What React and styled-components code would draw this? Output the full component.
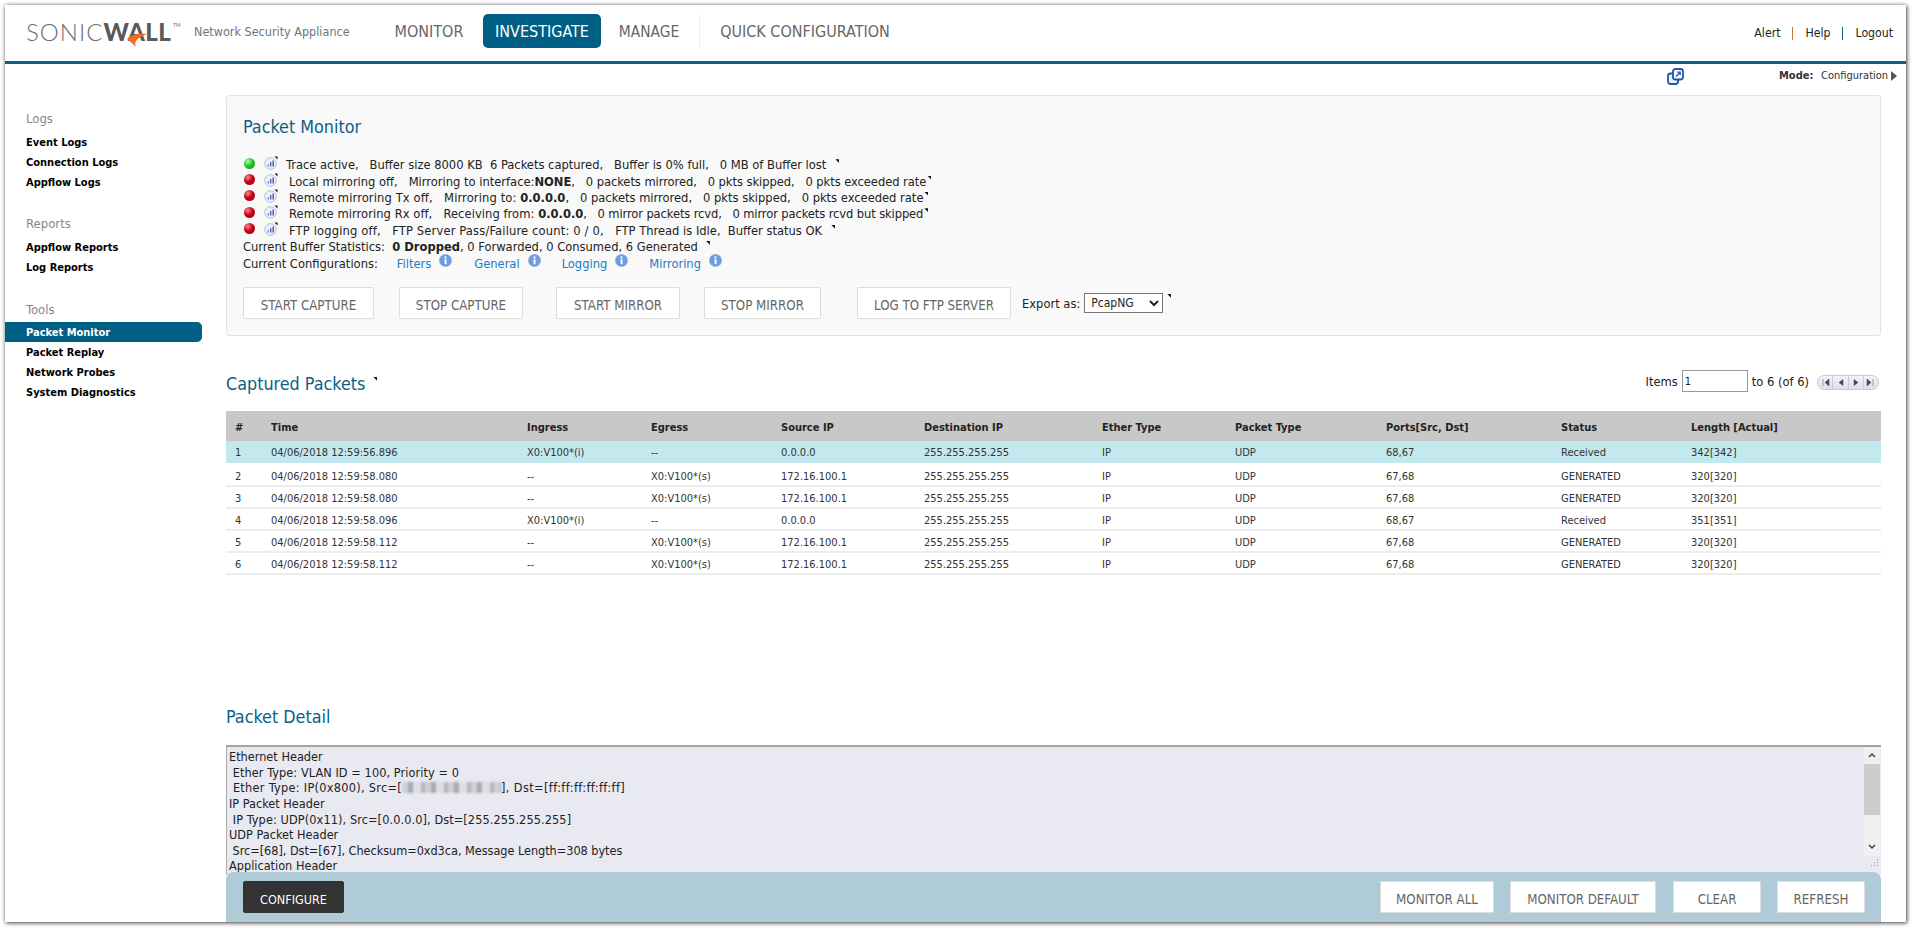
import React from "react";
import styled, { createGlobalStyle } from "styled-components";

const FONT = `"DejaVu Sans Condensed", "Noto Sans", "Liberation Sans", sans-serif`;

const Global = createGlobalStyle`
  html, body { margin: 0; padding: 0; background: #fff; overflow: hidden; }
  body { font-family: ${FONT}; font-size: 12.8px; color: #222; }
  * { box-sizing: border-box; }
`;

const Frame = styled.div`
  position: absolute; left: 5px; top: 5px; width: 1901px; height: 917px;
  background: #fff; overflow: hidden;
  box-shadow: 1px 1px 4px rgba(0,0,0,.65), 0 0 5px rgba(0,0,0,.25);
`;
const Header = styled.header`
  height: 59px; border-bottom: 3px solid #0b5f85; display: flex; align-items: flex-start; position: relative;
`;
const Logo = styled.div`
  position: absolute; left: 21px; top: 15px; width: 156px; height: 28px;
  font-family: "Lato", "Liberation Sans", sans-serif; font-size: 24px; line-height: 24px; white-space: nowrap; color: #6d6e71;
`;
const LogoThin = styled.span`font-weight: 300; letter-spacing: 1px;`;
const LogoBold = styled.span`font-weight: 900; color: #58595b; letter-spacing: 0.4px;`;
const LogoMark = styled.svg`position: absolute; left: 0; top: 0;`;
const Tm = styled.span`position: absolute; left: 147px; top: -7px; font-size: 5px; color: #666;`;
const Tagline = styled.span`
  position: absolute; left: 189px; top: 19px; font-size: 12.5px; line-height: 16px; color: #72757a; white-space: nowrap;
`;
const Nav = styled.nav`
  position: absolute; left: 377px; top: 9px; display: flex; height: 34px; align-items: center;
`;
const NavItem = styled.a`
  height: 34px; line-height: 36px; font-size: ${p => p.$fs || 16}px; color: ${p => p.$active ? "#fff" : "#666"};
  background: ${p => p.$active ? "#005f85" : "transparent"};
  border-radius: 5px; padding: 0; width: ${p => p.$w}px; margin-left: ${p => p.$ml || 0}px; text-align: center; white-space: nowrap;
`;
const NavDivider = styled.span`width: 1px; height: 32px; background: #eee; margin: 0 9px 0 10px;`;
const TopLinks = styled.div`
  position: absolute; right: 13px; top: 19px; display: flex; align-items: center; font-size: 12.2px; color: #222; line-height: 18px;
`;
const TopSep = styled.span`width: 1px; height: 13px; margin: 0 12px; background: ${p => p.$c};`;

const Body = styled.div`display: flex; height: 858px;`;
const Sidebar = styled.aside`width: 221px; padding-top: 42px; flex: none;`;
const SideGroup = styled.div`margin-bottom: 19px;`;
const SideTitle = styled.div`
  height: 26px; padding: 3px 0 0 21px; line-height: ${p => p.$lh || 20}px; font-size: 13px; color: #888;
`;
const SideLink = styled.a`
  display: block; height: 20px; line-height: 22px; padding-left: 21px; width: 197px; font-size: 11px; font-weight: 700; white-space: nowrap;
  color: ${p => p.$active ? "#fff" : "#000"};
  background: ${p => p.$active ? "#005f85" : "transparent"};
  border-radius: ${p => p.$active ? "0 5px 5px 0" : "0"};
`;

const Main = styled.main`position: relative; width: 1680px; height: 858px; padding-right: 25px;`;
const Strip = styled.div`height: 31px; position: relative;`;
const CopyIcon = styled.svg`position: absolute; left: 1441px; top: 4px;`;
const ModeLabel = styled.span`position: absolute; left: 1553px; top: 4px; font-size: 11px; line-height: 16px; font-weight: 700; color: #333;`;
const ModeValue = styled.span`position: absolute; left: 1595px; top: 4px; font-size: 11px; line-height: 16px; color: #333;`;
const ModeArrow = styled.span`
  position: absolute; left: 1665px; top: 7px; width: 0; height: 0;
  border-left: 6px solid #555; border-top: 5px solid transparent; border-bottom: 5px solid transparent;
`;

const Panel = styled.section`
  height: 241px; background: #f9f9f9; border: 1px solid #e2e2e2; border-radius: 3px; padding: 0 0 0 16px; position: relative;
`;
const PanelTitle = styled.h2`
  margin: 0; padding-top: 19px; height: 61px; font-weight: 400; font-size: 17.8px; line-height: 24px; color: #0b5f85;
`;
const StatusRow = styled.div`
  height: 16.4px; display: flex; align-items: center; white-space: pre; font-size: 12.8px; line-height: 16px; color: #222;
`;
const Ball = styled.span`
  width: 11px; height: 11px; border-radius: 50%; flex: none; margin: -4px 9px 0 1px;
  background: radial-gradient(circle at 35% 30%, ${p => p.$on ? "#b5f7a8, #16c41f 50%, #0a9a14" : "#f58a90, #c8001a 45%, #a00014"});
`;
const ChartIcon = styled.svg`flex: none; margin: -4px 0 0 0;`;
const RowText = styled.span`margin-left: ${p => p.$ml}px;`;
const Spaced = styled.span`letter-spacing: ${p => p.$ls}px;`;
const Tick = styled.i`
  display: inline-block; width: 4px; height: 4px; background: #111; clip-path: polygon(0 0, 100% 0, 100% 100%);
  margin-left: ${p => p.$ml || 0}px; vertical-align: ${p => p.$va || 6}px;
`;
const RowTick = styled(Tick)`margin-top: -9px;`;
const FieldTick = styled(Tick)`align-self: flex-start; margin-top: 7px;`;
const Bold = styled.b`font-weight: 700;`;
const ConfigLink = styled.a`color: #1c7cc4; margin-left: ${p => p.$ml}px;`;
const InfoIcon = styled.svg`margin: -6px 0 0 8px; flex: none;`;
const ButtonRow = styled.div`
  position: absolute; left: 16px; top: 191px; display: flex; align-items: center;
`;
const Btn = styled.button`
  height: 32px; width: ${p => p.$w}px; margin-left: ${p => p.$ml || 0}px; padding: 4px 0 0;
  font-family: ${FONT}; font-size: 13.2px; color: #666; background: #fff; border: 1px solid #ddd; border-radius: 1px; white-space: nowrap;
`;
const DarkBtn = styled(Btn)`background: #333; color: #fff; border-color: #333; border-radius: 2px; font-size: 12.5px;`;
const ExportLabel = styled.span`margin-left: 11px; font-size: 12.8px; color: #222;`;
const Select = styled.select`
  margin-left: 4px; width: 79px; height: 20px; font-family: ${FONT}; font-size: 12px; border: 1px solid #767676; background: #fff; color: #222; padding: 0 2px; border-radius: 0;
`;

const CaptureHead = styled.div`height: 75px; position: relative;`;
const Heading = styled.h2`
  margin: 0; position: absolute; left: 0; top: ${p => p.$top}px; font-weight: 400; font-size: 17.8px; line-height: 24px; color: #0b5f85; white-space: nowrap;
`;
const Paging = styled.div`
  position: absolute; right: 2px; top: 34px; display: flex; align-items: center; font-size: 12.8px; color: #222; height: 22px; white-space: pre;
`;
const PageInput = styled.input`
  width: 66px; height: 22px; margin: 0 4px 0 4px; border: 1px solid #999; padding: 0 2px; font-family: ${FONT}; font-size: 11px; color: #222; background: #fff;
`;
const Pager = styled.div`
  margin: 2px 0 0 8px; width: 62px; height: 15px; display: flex; border: 1px solid #c9cbd8; border-radius: 7px; overflow: hidden; background: linear-gradient(#f2f3f9, #dde0ec);
`;
const PagerCell = styled.span`
  flex: 1; display: flex; align-items: center; justify-content: center; border-right: ${p => p.$last ? "none" : "1px solid #c9cbd8"};
`;

const Table = styled.table`
  width: 1655px; border-collapse: collapse; table-layout: fixed; font-size: 11px; color: #333;
`;
const Th = styled.th`
  height: 30px; background: #c8c8c8; text-align: left; padding: 2px 0 0 9px; font-weight: 700; font-size: 11px; color: #222; white-space: nowrap;
`;
const Tr = styled.tr`background: ${p => p.$sel ? "#c3e8ee" : "#fff"};`;
const Td = styled.td`
  height: ${p => p.$sel ? 23 : 22}px; padding: ${p => p.$sel ? 1 : 2}px 0 0 9px; border-bottom: 2px solid ${p => p.$sel ? "#fff" : "#ececec"}; white-space: nowrap; color: #333;
`;

const DetailWrap = styled.div`position: relative; height: 171px;`;
const DetailBox = styled.div`
  position: absolute; left: 0; top: 170px; width: 1655px; height: 130px; background: #e9e9f2; border-top: 2px solid #a2a2a2; border-left: 1px solid #aaa; padding: 2px 0 0 2px; overflow: hidden;
  font-size: 12.6px; color: #222;
`;
const DetailLine = styled.div`height: 15.65px; line-height: 15.65px; white-space: pre;`;
const Blur = styled.span`
  display: inline-block; width: 99px; height: 11px; vertical-align: -1px;
  background: repeating-linear-gradient(90deg, #cfcfd6 0 6px, #a9a9b2 6px 11px, #dedee4 11px 19px, #b5b5bd 19px 23px);
  filter: blur(1.2px);
`;
const ScrollBar = styled.div`
  position: absolute; left: 1637px; top: 0; width: 16px; height: 109px; background: #f0f0f0;
`;
const Thumb = styled.div`position: absolute; top: 17px; left: 0; width: 16px; height: 51px; background: #cdcdcd;`;
const ScrollArrow = styled.svg`position: absolute; left: 4px; top: ${p => p.$top}px;`;
const Grip = styled.svg`position: absolute; left: 1642px; top: 111px;`;

const Footer = styled.footer`
  position: absolute; left: 0; bottom: 0; width: 1655px; height: 50px; background: #b0cbd8; border-radius: 8px 8px 0 0; padding: 9px 16px 0 17px; display: flex; align-items: flex-start;
`;
const Spacer = styled.div`flex: 1;`;

const cols = [36,256,124,130,143,178,133,151,175,130,199];
const heads = ["#","Time","Ingress","Egress","Source IP","Destination IP","Ether Type","Packet Type","Ports[Src, Dst]","Status","Length [Actual]"];
const rows = [
  ["1","04/06/2018 12:59:56.896","X0:V100*(i)","--","0.0.0.0","255.255.255.255","IP","UDP","68,67","Received","342[342]"],
  ["2","04/06/2018 12:59:58.080","--","X0:V100*(s)","172.16.100.1","255.255.255.255","IP","UDP","67,68","GENERATED","320[320]"],
  ["3","04/06/2018 12:59:58.080","--","X0:V100*(s)","172.16.100.1","255.255.255.255","IP","UDP","67,68","GENERATED","320[320]"],
  ["4","04/06/2018 12:59:58.096","X0:V100*(i)","--","0.0.0.0","255.255.255.255","IP","UDP","68,67","Received","351[351]"],
  ["5","04/06/2018 12:59:58.112","--","X0:V100*(s)","172.16.100.1","255.255.255.255","IP","UDP","67,68","GENERATED","320[320]"],
  ["6","04/06/2018 12:59:58.112","--","X0:V100*(s)","172.16.100.1","255.255.255.255","IP","UDP","67,68","GENERATED","320[320]"],
];

const Chart = () => (
  <ChartIcon width="14" height="14" viewBox="0 0 14 14">
    <circle cx="6.5" cy="7.5" r="5.8" fill="#eceef8" stroke="#b9bdd6" strokeWidth="1" />
    <rect x="3.5" y="8" width="1.4" height="2.5" fill="#7f90c8" />
    <rect x="6" y="6" width="1.4" height="4.5" fill="#4f6cb8" />
    <rect x="8.5" y="4.5" width="1.4" height="6" fill="#3f5aa8" />
    <path d="M10.5 0.5 L13.5 0.5 L13.5 3.5 Z" fill="#111" />
  </ChartIcon>
);
const Info = () => (
  <InfoIcon width="13" height="13" viewBox="0 0 13 13">
    <circle cx="6.5" cy="6.5" r="6.2" fill="#6f9cdc" stroke="#9db9e4" strokeWidth=".6" />
    <circle cx="6.5" cy="3.4" r="1.1" fill="#fff" />
    <rect x="5.6" y="5.2" width="1.9" height="5" fill="#fff" />
  </InfoIcon>
);

export default function App() {
  return (
    <>
      <Global />
      <Frame>
        <Header>
          <Logo>
            <LogoThin>SONIC</LogoThin><LogoBold>WALL</LogoBold>
            <Tm>TM</Tm>
            <LogoMark width="156" height="36" viewBox="0 0 156 36">
              <path d="M121 14 C112 13 104 15 101 19 C104 21 107 24 110 27 C108 22 109 19 121 14 Z" fill="#f26b21" />
            </LogoMark>
          </Logo>
          <Tagline>Network Security Appliance</Tagline>
          <Nav>
            <NavItem $w={94}>MONITOR</NavItem>
            <NavItem $active $w={118} $ml={7}>INVESTIGATE</NavItem>
            <NavItem $w={80} $ml={8} $fs={15.4}>MANAGE</NavItem>
            <NavDivider />
            <NavItem $w={192}>QUICK CONFIGURATION</NavItem>
          </Nav>
          <TopLinks>
            <span>Alert</span><TopSep $c="#c87a3a" /><span>Help</span><TopSep $c="#0b5f85" /><span>Logout</span>
          </TopLinks>
        </Header>
        <Body>
          <Sidebar>
            <SideGroup>
              <SideTitle>Logs</SideTitle>
              <SideLink>Event Logs</SideLink>
              <SideLink>Connection Logs</SideLink>
              <SideLink>Appflow Logs</SideLink>
            </SideGroup>
            <SideGroup>
              <SideTitle>Reports</SideTitle>
              <SideLink>Appflow Reports</SideLink>
              <SideLink>Log Reports</SideLink>
            </SideGroup>
            <SideGroup>
              <SideTitle $lh={22}>Tools</SideTitle>
              <SideLink $active>Packet Monitor</SideLink>
              <SideLink>Packet Replay</SideLink>
              <SideLink>Network Probes</SideLink>
              <SideLink>System Diagnostics</SideLink>
            </SideGroup>
          </Sidebar>
          <Main>
            <Strip>
              <CopyIcon width="17" height="17" viewBox="0 0 17 17">
                <rect x="1" y="5.5" width="10" height="10.5" rx="2.5" fill="#eef0f6" stroke="#1f55a8" strokeWidth="1.8" />
                <rect x="6" y="1" width="10" height="10.5" rx="2.5" fill="#fff" stroke="#1f55a8" strokeWidth="1.8" />
                <path d="M9 8.5 L13 4.5 M10.3 4.2 H13.2 V7" fill="none" stroke="#1f55a8" strokeWidth="1.3" />
              </CopyIcon>
              <ModeLabel>Mode:</ModeLabel>
              <ModeValue>Configuration</ModeValue>
              <ModeArrow />
            </Strip>
            <Panel>
              <PanelTitle>Packet Monitor</PanelTitle>
              <StatusRow><Ball $on /><Chart /><RowText $ml={8}>{"Trace active,   Buffer size 8000 KB  6 Packets captured,   Buffer is 0% full,   0 MB of Buffer lost"}<Tick $ml={9} /></RowText></StatusRow>
              <StatusRow><Ball /><Chart /><RowText $ml={11}>{"Local mirroring off,   Mirroring to interface:"}<Bold>NONE</Bold><Spaced $ls={-0.05}>{",   0 packets mirrored,   0 pkts skipped,   0 pkts exceeded rate"}</Spaced><Tick $ml={1} /></RowText></StatusRow>
              <StatusRow><Ball /><Chart /><RowText $ml={11}><Spaced $ls={0.12}>{"Remote mirroring Tx off,   Mirroring to: "}</Spaced><Bold>0.0.0.0</Bold>{",   0 packets mirrored,   0 pkts skipped,   0 pkts exceeded rate"}<Tick $ml={1} /></RowText></StatusRow>
              <StatusRow><Ball /><Chart /><RowText $ml={11}><Spaced $ls={0.06}>{"Remote mirroring Rx off,   Receiving from: "}</Spaced><Bold>0.0.0.0</Bold><Spaced $ls={-0.1}>{",   0 mirror packets rcvd,   0 mirror packets rcvd but skipped"}</Spaced><Tick $ml={1} /></RowText></StatusRow>
              <StatusRow><Ball /><Chart /><RowText $ml={11}><Spaced $ls={0.16}>{"FTP logging off,   FTP Server Pass/Failure count: 0 / 0,   "}</Spaced>{"FTP Thread is Idle,  Buffer status OK"}<Tick $ml={9} /></RowText></StatusRow>
              <StatusRow>{"Current Buffer Statistics:  "}<Bold>0 Dropped</Bold>{", 0 Forwarded, 0 Consumed, 6 Generated"}<RowTick $ml={8} /></StatusRow>
              <StatusRow>{"Current Configurations:"}<ConfigLink $ml={19}>Filters</ConfigLink><Info /><ConfigLink $ml={22}>General</ConfigLink><Info /><ConfigLink $ml={21}>Logging</ConfigLink><Info /><ConfigLink $ml={21}>Mirroring</ConfigLink><Info /></StatusRow>
              <ButtonRow>
                <Btn $w={131}>START CAPTURE</Btn>
                <Btn $w={124} $ml={25}>STOP CAPTURE</Btn>
                <Btn $w={124} $ml={33}>START MIRROR</Btn>
                <Btn $w={117} $ml={24}>STOP MIRROR</Btn>
                <Btn $w={154} $ml={36}>LOG TO FTP SERVER</Btn>
                <ExportLabel>Export as:</ExportLabel>
                <Select defaultValue="PcapNG"><option>PcapNG</option></Select>
                <FieldTick $ml={4} />
              </ButtonRow>
            </Panel>
            <CaptureHead>
              <Heading $top={36}>Captured Packets<Tick $ml={8} $va={9} /></Heading>
              <Paging>
                Items<PageInput defaultValue="1" readOnly />to 6 (of 6)
                <Pager>
                  {["M3 2v7M9 2L5 5.5 9 9Z","M8 2.5L4 5.5 8 8.5Z","M4 2.5l4 3L4 8.5Z","M2 2l4 3.5L2 9ZM8 2v7"].map((d, i) => (
                    <PagerCell key={i} $last={i === 3}>
                      <svg width="11" height="11" viewBox="0 0 11 11"><path d={d} fill="#445" stroke="#445" strokeWidth=".5" /></svg>
                    </PagerCell>
                  ))}
                </Pager>
              </Paging>
            </CaptureHead>
            <Table>
              <colgroup>{cols.map((w, i) => <col key={i} width={w} />)}</colgroup>
              <thead><tr>{heads.map(h => <Th key={h}>{h}</Th>)}</tr></thead>
              <tbody>
                {rows.map((r, i) => (
                  <Tr key={i} $sel={i === 0}>
                    {r.map((c, j) => <Td key={j} $sel={i === 0}>{c}</Td>)}
                  </Tr>
                ))}
              </tbody>
            </Table>
            <DetailWrap>
              <Heading $top={130}>Packet Detail</Heading>
              <DetailBox>
                <DetailLine>Ethernet Header</DetailLine>
                <DetailLine><Spaced $ls={0.08}>{" Ether Type: VLAN ID = 100, Priority = 0"}</Spaced></DetailLine>
                <DetailLine><Spaced $ls={0.3}>{" Ether Type: IP(0x800), Src=["}</Spaced><Blur /><Spaced $ls={0.4}>{"], Dst=[ff:ff:ff:ff:ff:ff]"}</Spaced></DetailLine>
                <DetailLine>IP Packet Header</DetailLine>
                <DetailLine><Spaced $ls={0.1}>{" IP Type: UDP(0x11), Src=[0.0.0.0], Dst=[255.255.255.255]"}</Spaced></DetailLine>
                <DetailLine>UDP Packet Header</DetailLine>
                <DetailLine><Spaced $ls={-0.04}>{" Src=[68], Dst=[67], Checksum=0xd3ca, Message Length=308 bytes"}</Spaced></DetailLine>
                <DetailLine>Application Header</DetailLine>
                <ScrollBar>
                  <ScrollArrow $top={5} width="8" height="6" viewBox="0 0 8 6"><path d="M1 5L4 2l3 3" fill="none" stroke="#444" strokeWidth="1.5" /></ScrollArrow>
                  <Thumb />
                  <ScrollArrow $top={97} width="8" height="6" viewBox="0 0 8 6"><path d="M1 1l3 3 3-3" fill="none" stroke="#444" strokeWidth="1.5" /></ScrollArrow>
                </ScrollBar>
                <Grip width="10" height="10" viewBox="0 0 10 10"><path d="M8 1h1v1H8zM5 4h1v1H5zM8 4h1v1H8zM2 7h1v1H2zM5 7h1v1H5zM8 7h1v1H8z" fill="#999" /></Grip>
              </DetailBox>
            </DetailWrap>
            <Footer>
              <DarkBtn $w={101}>CONFIGURE</DarkBtn>
              <Spacer />
              <Btn $w={114}>MONITOR ALL</Btn>
              <Btn $w={146} $ml={16}>MONITOR DEFAULT</Btn>
              <Btn $w={88} $ml={17}>CLEAR</Btn>
              <Btn $w={88} $ml={16}>REFRESH</Btn>
            </Footer>
          </Main>
        </Body>
      </Frame>
    </>
  );
}
